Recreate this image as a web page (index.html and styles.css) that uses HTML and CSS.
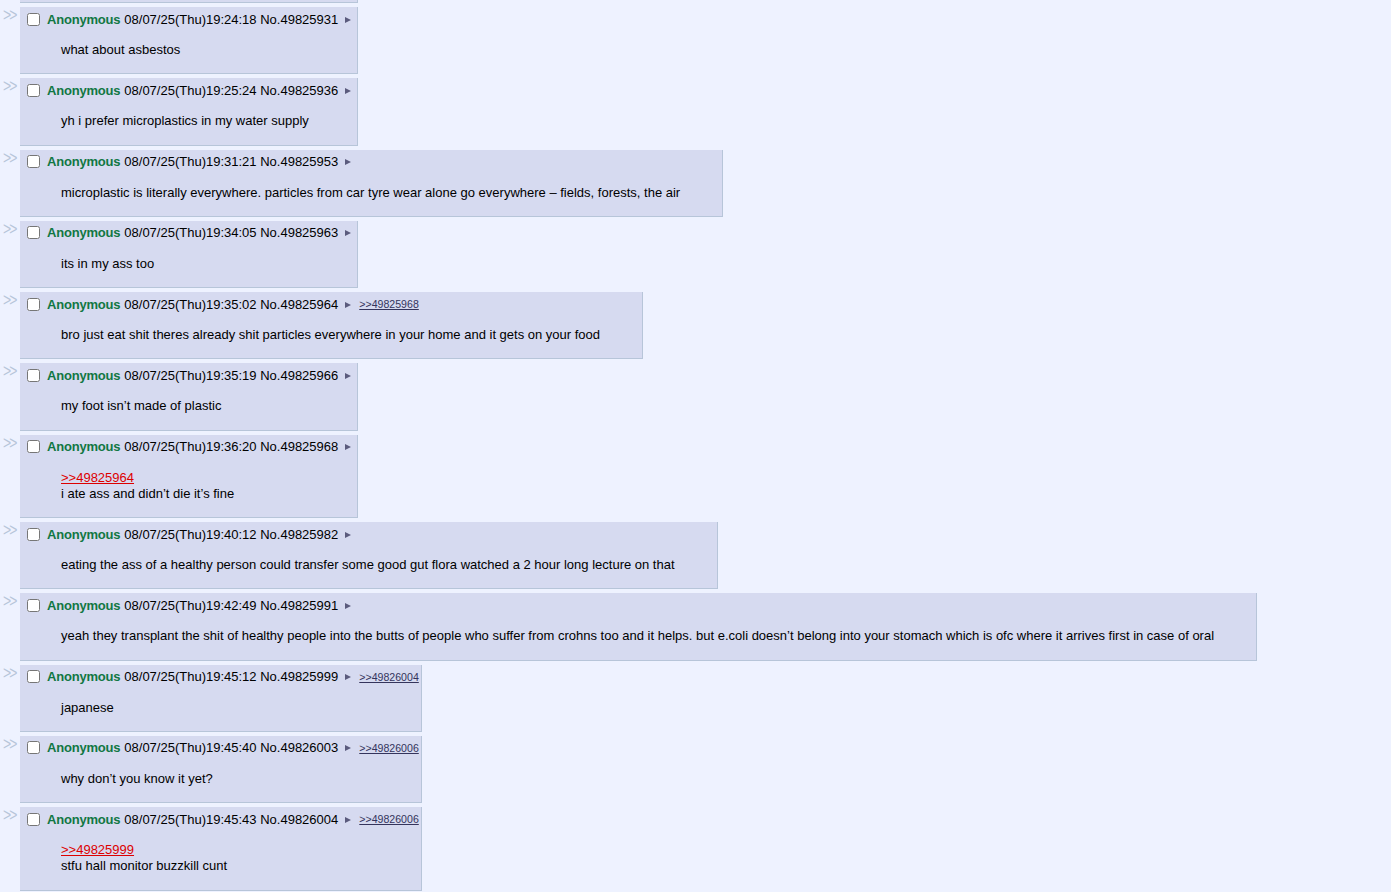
FILE: index.html
```html
<!DOCTYPE html>
<html lang="en">
<head>
  <meta charset="UTF-8">
  <title>Thread</title>
  <link rel="stylesheet" href="styles.css">
</head>
<body>
  <div class="thread">
    <div class="reply-stub"></div>

    <div class="post">
      <div class="side-arrows">&gt;&gt;</div>
      <div class="reply">
        <div class="post-info"><input type="checkbox"><span class="name">Anonymous</span><span class="date">08/07/25(Thu)19:24:18 No.49825931</span><span class="menu-btn"></span></div>
        <blockquote>what about asbestos</blockquote>
      </div>
    </div>

    <div class="post">
      <div class="side-arrows">&gt;&gt;</div>
      <div class="reply">
        <div class="post-info"><input type="checkbox"><span class="name">Anonymous</span><span class="date">08/07/25(Thu)19:25:24 No.49825936</span><span class="menu-btn"></span></div>
        <blockquote>yh i prefer microplastics in my water supply</blockquote>
      </div>
    </div>

    <div class="post">
      <div class="side-arrows">&gt;&gt;</div>
      <div class="reply">
        <div class="post-info"><input type="checkbox"><span class="name">Anonymous</span><span class="date">08/07/25(Thu)19:31:21 No.49825953</span><span class="menu-btn"></span></div>
        <blockquote>microplastic is literally everywhere. particles from car tyre wear alone go everywhere – fields, forests, the air</blockquote>
      </div>
    </div>

    <div class="post">
      <div class="side-arrows">&gt;&gt;</div>
      <div class="reply">
        <div class="post-info"><input type="checkbox"><span class="name">Anonymous</span><span class="date">08/07/25(Thu)19:34:05 No.49825963</span><span class="menu-btn"></span></div>
        <blockquote>its in my ass too</blockquote>
      </div>
    </div>

    <div class="post">
      <div class="side-arrows">&gt;&gt;</div>
      <div class="reply">
        <div class="post-info"><input type="checkbox"><span class="name">Anonymous</span><span class="date">08/07/25(Thu)19:35:02 No.49825964</span><span class="menu-btn"></span><a class="backlink" href="#p49825968">&gt;&gt;49825968</a></div>
        <blockquote>bro just eat shit theres already shit particles everywhere in your home and it gets on your food</blockquote>
      </div>
    </div>

    <div class="post">
      <div class="side-arrows">&gt;&gt;</div>
      <div class="reply">
        <div class="post-info"><input type="checkbox"><span class="name">Anonymous</span><span class="date">08/07/25(Thu)19:35:19 No.49825966</span><span class="menu-btn"></span></div>
        <blockquote>my foot isn’t made of plastic</blockquote>
      </div>
    </div>

    <div class="post">
      <div class="side-arrows">&gt;&gt;</div>
      <div class="reply">
        <div class="post-info"><input type="checkbox"><span class="name">Anonymous</span><span class="date">08/07/25(Thu)19:36:20 No.49825968</span><span class="menu-btn"></span></div>
        <blockquote><a class="quotelink" href="#p49825964">&gt;&gt;49825964</a><br>i ate ass and didn’t die it’s fine</blockquote>
      </div>
    </div>

    <div class="post">
      <div class="side-arrows">&gt;&gt;</div>
      <div class="reply">
        <div class="post-info"><input type="checkbox"><span class="name">Anonymous</span><span class="date">08/07/25(Thu)19:40:12 No.49825982</span><span class="menu-btn"></span></div>
        <blockquote>eating the ass of a healthy person could transfer some good gut flora watched a 2 hour long lecture on that</blockquote>
      </div>
    </div>

    <div class="post">
      <div class="side-arrows">&gt;&gt;</div>
      <div class="reply">
        <div class="post-info"><input type="checkbox"><span class="name">Anonymous</span><span class="date">08/07/25(Thu)19:42:49 No.49825991</span><span class="menu-btn"></span></div>
        <blockquote>yeah they transplant the shit of healthy people into the butts of people who suffer from crohns too and it helps. but e.coli doesn’t belong into your stomach which is ofc where it arrives first in case of oral</blockquote>
      </div>
    </div>

    <div class="post">
      <div class="side-arrows">&gt;&gt;</div>
      <div class="reply">
        <div class="post-info"><input type="checkbox"><span class="name">Anonymous</span><span class="date">08/07/25(Thu)19:45:12 No.49825999</span><span class="menu-btn"></span><a class="backlink" href="#p49826004">&gt;&gt;49826004</a></div>
        <blockquote>japanese</blockquote>
      </div>
    </div>

    <div class="post">
      <div class="side-arrows">&gt;&gt;</div>
      <div class="reply">
        <div class="post-info"><input type="checkbox"><span class="name">Anonymous</span><span class="date">08/07/25(Thu)19:45:40 No.49826003</span><span class="menu-btn"></span><a class="backlink" href="#p49826006">&gt;&gt;49826006</a></div>
        <blockquote>why don’t you know it yet?</blockquote>
      </div>
    </div>

    <div class="post">
      <div class="side-arrows">&gt;&gt;</div>
      <div class="reply">
        <div class="post-info"><input type="checkbox"><span class="name">Anonymous</span><span class="date">08/07/25(Thu)19:45:43 No.49826004</span><span class="menu-btn"></span><a class="backlink" href="#p49826006">&gt;&gt;49826006</a></div>
        <blockquote><a class="quotelink" href="#p49825999">&gt;&gt;49825999</a><br>stfu hall monitor buzzkill cunt</blockquote>
      </div>
    </div>
  </div>
</body>
</html>
```

FILE: styles.css
```css
* {
  box-sizing: border-box;
}

body {
  margin: 0;
  background: #eef2ff;
  color: #000;
  font-family: "Liberation Sans", Arial, sans-serif;
  font-size: 13px;
  overflow: hidden;
}

.thread {
  display: flex;
  flex-direction: column;
  align-items: flex-start;
  gap: 4px;
}

.reply-stub {
  margin-left: 20px;
  width: 338px;
  height: 3px;
  background: #d6daf0;
  border-right: 1px solid #b7c5d9;
  border-bottom: 1px solid #b7c5d9;
}

.post {
  display: flex;
  align-items: flex-start;
}

.side-arrows {
  width: 20px;
  padding-left: 3px;
  color: #b7c5d9;
  font-size: 14px;
  line-height: 12px;
  letter-spacing: -2px;
  transform: scaleY(1.3);
  transform-origin: top left;
}

.reply {
  background: #d6daf0;
  border-right: 1px solid #b7c5d9;
  border-bottom: 1px solid #b7c5d9;
  padding: 2px;
}

.post-info {
  display: flex;
  align-items: center;
  height: 20px;
  white-space: nowrap;
}

.post-info input {
  width: 13px;
  height: 13px;
  margin: 3px 3px 3px 5px;
}

.name {
  margin-left: 4px;
  color: #117743;
  font-weight: bold;
  letter-spacing: -0.2px;
}

.date {
  margin-left: 4px;
}

.menu-btn {
  width: 10px;
  height: 6px;
  margin-left: 7px;
  margin-top: 1px;
  position: relative;
}

.menu-btn::before {
  content: "";
  position: absolute;
  left: 0;
  top: 0;
  border-left: 6px solid #5b5b7d;
  border-top: 3px solid transparent;
  border-bottom: 3px solid transparent;
}

.backlink {
  margin-left: 4px;
  color: #34345c;
  font-size: 10.6px;
  text-decoration: underline;
}

blockquote {
  margin: 13px 40px 13.3px 39px;
  line-height: 16px;
  white-space: nowrap;
}

.quotelink {
  color: #dd0000;
  text-decoration: underline;
}
```
